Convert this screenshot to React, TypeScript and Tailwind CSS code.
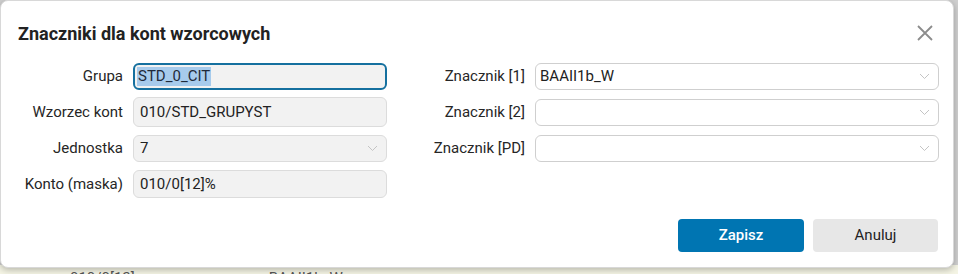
import React from 'react'

const font = { fontFamily: 'Roboto, "Liberation Sans", sans-serif' }

function Chevron() {
    return (
        <svg width="11" height="7" viewBox="0 0 11 7" className="shrink-0">
            <path d="M1 1l4.5 4.5L10 1" fill="none" stroke="#c4c4c4" strokeWidth="1" />
        </svg>
    )
}

function Row({ label, children, labelW }: { label: string; children: React.ReactNode; labelW: string }) {
    return (
        <div className="flex items-center h-[28px]">
            <div className={`${labelW} shrink-0 text-right pr-[10px] text-[15px] text-[#262626] whitespace-nowrap`}>{label}</div>
            {children}
        </div>
    )
}

export default function App() {
    return (
        <div style={font} className="relative w-[958px] h-[274px] overflow-hidden bg-[#cfcfcf]">
            {/* background content peeking under the dialog */}
            <div className="absolute left-0 right-0 top-[265px] h-[20px] bg-[#f4f4e4] flex text-[15px] leading-[18px] text-[#555] pt-[4px]">
                <span className="ml-[70px]">010/0[12]</span>
                <span className="ml-[134px]">BAAII1b_W</span>
            </div>

            {/* dialog */}
            <div className="absolute left-0 top-0 w-[954px] h-[268px] bg-white rounded-[8px] border border-[#d8d8d8] shadow-[0_2px_6px_rgba(0,0,0,0.25)] flex flex-col pl-[17px] pr-[15px]">
                <div className="flex items-center justify-between h-[32px] mt-[16px]">
                    <h2 className="text-[18px] font-bold text-[#222]">Znaczniki dla kont wzorcowych</h2>
                    <svg width="18" height="18" viewBox="0 0 18 18" className="mr-[4px]">
                        <path d="M2 2l14 14M16 2L2 16" stroke="#8c8c8c" strokeWidth="1.8" fill="none" />
                    </svg>
                </div>

                <div className="flex mt-[13px]">
                    {/* left column */}
                    <div className="flex flex-col gap-[8px] w-[369px]">
                        <Row label="Grupa" labelW="w-[115px]">
                            <div className="w-[254px] h-[27px] rounded-[6px] border-2 border-[#15709f] bg-[#f2f2f2] flex items-center px-[2px] text-[15px] text-[#1f2a3a]">
                                <span className="bg-[#a7cbec] leading-[19px] px-[1px]">STD_0_CIT</span>
                            </div>
                        </Row>
                        <Row label="Wzorzec kont" labelW="w-[115px]">
                            <div className="w-[254px] h-[30px] rounded-[6px] border border-[#dcdcdc] bg-[#f2f2f2] flex items-center px-[6px] text-[15px] text-[#222]">
                                010/STD_GRUPYST
                            </div>
                        </Row>
                        <Row label="Jednostka" labelW="w-[115px]">
                            <div className="w-[254px] h-[27px] rounded-[6px] border border-[#dcdcdc] bg-[#f2f2f2] flex items-center justify-between pl-[6px] pr-[8px] text-[15px] text-[#222]">
                                <span>7</span>
                                <Chevron />
                            </div>
                        </Row>
                        <Row label="Konto (maska)" labelW="w-[115px]">
                            <div className="w-[254px] h-[28px] rounded-[6px] border border-[#dcdcdc] bg-[#f2f2f2] flex items-center px-[6px] text-[15px] text-[#222]">
                                010/0[12]%
                            </div>
                        </Row>
                    </div>

                    {/* divider */}
                    <div className="w-px bg-[#e2e2e2] ml-[22px] h-[136px]" />

                    {/* right column */}
                    <div className="flex flex-col gap-[8px] ml-[1px]">
                        <Row label="Znacznik [1]" labelW="w-[125px]">
                            <div className="w-[404px] h-[27px] rounded-[6px] border border-[#cfcfcf] bg-white flex items-center justify-between pl-[4px] pr-[8px] text-[15px] text-[#222]">
                                <span>BAAII1b_W</span>
                                <Chevron />
                            </div>
                        </Row>
                        <Row label="Znacznik [2]" labelW="w-[125px]">
                            <div className="w-[404px] h-[27px] rounded-[6px] border border-[#cfcfcf] bg-white flex items-center justify-end pr-[8px]">
                                <Chevron />
                            </div>
                        </Row>
                        <Row label="Znacznik [PD]" labelW="w-[125px]">
                            <div className="w-[404px] h-[27px] rounded-[6px] border border-[#cfcfcf] bg-white flex items-center justify-end pr-[8px]">
                                <Chevron />
                            </div>
                        </Row>
                    </div>
                </div>

                <div className="flex justify-end gap-[9px] mt-[21px]">
                    <button className="w-[126px] h-[33px] rounded-[4px] bg-[#0075b2] text-white text-[15px] font-medium">Zapisz</button>
                    <button className="w-[125px] h-[33px] rounded-[4px] bg-[#e7e7e7] text-[#222] text-[15px]">Anuluj</button>
                </div>
            </div>
        </div>
    )
}
